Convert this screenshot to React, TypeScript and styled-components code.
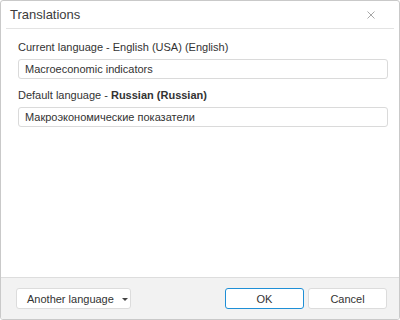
import React from 'react';
import styled, { createGlobalStyle } from 'styled-components';

const GlobalStyle = createGlobalStyle`
    html, body {
        margin: 0;
        padding: 0;
        background: #ffffff;
    }
    body {
        font-family: "Liberation Sans", Arial, sans-serif;
        font-size: 11px;
        color: #333333;
    }
`;

const Dialog = styled.div`
    box-sizing: border-box;
    width: 400px;
    height: 320px;
    display: flex;
    flex-direction: column;
    border: 1px solid #c9c9c9;
    border-radius: 3px;
    background: #ffffff;
    overflow: hidden;
`;

const Header = styled.div`
    display: flex;
    align-items: center;
    justify-content: space-between;
    height: 27px;
    margin: 0 5px;
    padding: 0 4px;
    border-bottom: 1px solid #e3e3e3;
`;

const Title = styled.div`
    font-size: 13px;
    color: #3c3c3c;
`;

const CloseButton = styled.button`
    display: flex;
    align-items: center;
    justify-content: center;
    width: 20px;
    height: 20px;
    margin-right: 9px;
    padding: 0;
    border: none;
    background: none;
    cursor: pointer;
`;

const Content = styled.div`
    flex: 1;
    padding: 10px 11px 0 17px;
    display: flex;
    flex-direction: column;
`;

const Label = styled.div`
    height: 16px;
    line-height: 16px;
    margin-bottom: 4px;
    color: #333333;

    b {
        font-weight: bold;
    }
`;

const TextInput = styled.input`
    box-sizing: border-box;
    width: 100%;
    height: 20px;
    margin: 0 0 8px 0;
    padding: 0 6px;
    border: 1px solid #dadada;
    border-radius: 3px;
    font-family: "Liberation Sans", Arial, sans-serif;
    font-size: 11px;
    color: #333333;
    outline: none;
`;

const Footer = styled.div`
    display: flex;
    align-items: center;
    height: 41px;
    padding: 0 12px 0 15px;
    border-top: 1px solid #dddddd;
    background: #f2f2f2;
`;

const Spacer = styled.div`
    flex: 1;
`;

const Button = styled.button<{ $primary?: boolean; $width: number }>`
    box-sizing: border-box;
    display: flex;
    align-items: center;
    justify-content: center;
    flex: none;
    width: ${p => p.$width}px;
    height: 21px;
    padding: 0;
    margin-left: ${p => (p.$primary ? 0 : 4)}px;
    border: 1px solid ${p => (p.$primary ? '#1f8fd6' : '#dcdcdc')};
    border-radius: 3px;
    background: #ffffff;
    font-family: "Liberation Sans", Arial, sans-serif;
    font-size: 11px;
    color: #333333;
    white-space: nowrap;
    cursor: pointer;
`;

const MenuButton = styled(Button)`
    justify-content: flex-start;
    gap: 8px;
    margin-left: 0;
    padding: 0 6px 0 10px;
`;

const Caret = styled.span`
    width: 0;
    height: 0;
    border-left: 3px solid transparent;
    border-right: 3px solid transparent;
    border-top: 3px solid #444444;
    margin-top: 1px;
`;

export default function App() {
    return (
        <>
            <GlobalStyle />
            <Dialog>
                <Header>
                    <Title>Translations</Title>
                    <CloseButton aria-label="close">
                        <svg width="8" height="8" viewBox="0 0 8 8">
                            <path d="M0.5 0.5 L7.5 7.5 M7.5 0.5 L0.5 7.5" stroke="#a8a8a8" strokeWidth="1" />
                        </svg>
                    </CloseButton>
                </Header>
                <Content>
                    <Label>Current language - English (USA) (English)</Label>
                    <TextInput defaultValue="Macroeconomic indicators" />
                    <Label>
                        Default language - <b>Russian (Russian)</b>
                    </Label>
                    <TextInput defaultValue="Макроэкономические показатели" />
                </Content>
                <Footer>
                    <MenuButton $width={115}>
                        Another language
                        <Caret />
                    </MenuButton>
                    <Spacer />
                    <Button $primary $width={79}>
                        OK
                    </Button>
                    <Button $width={79}>Cancel</Button>
                </Footer>
            </Dialog>
        </>
    );
}
